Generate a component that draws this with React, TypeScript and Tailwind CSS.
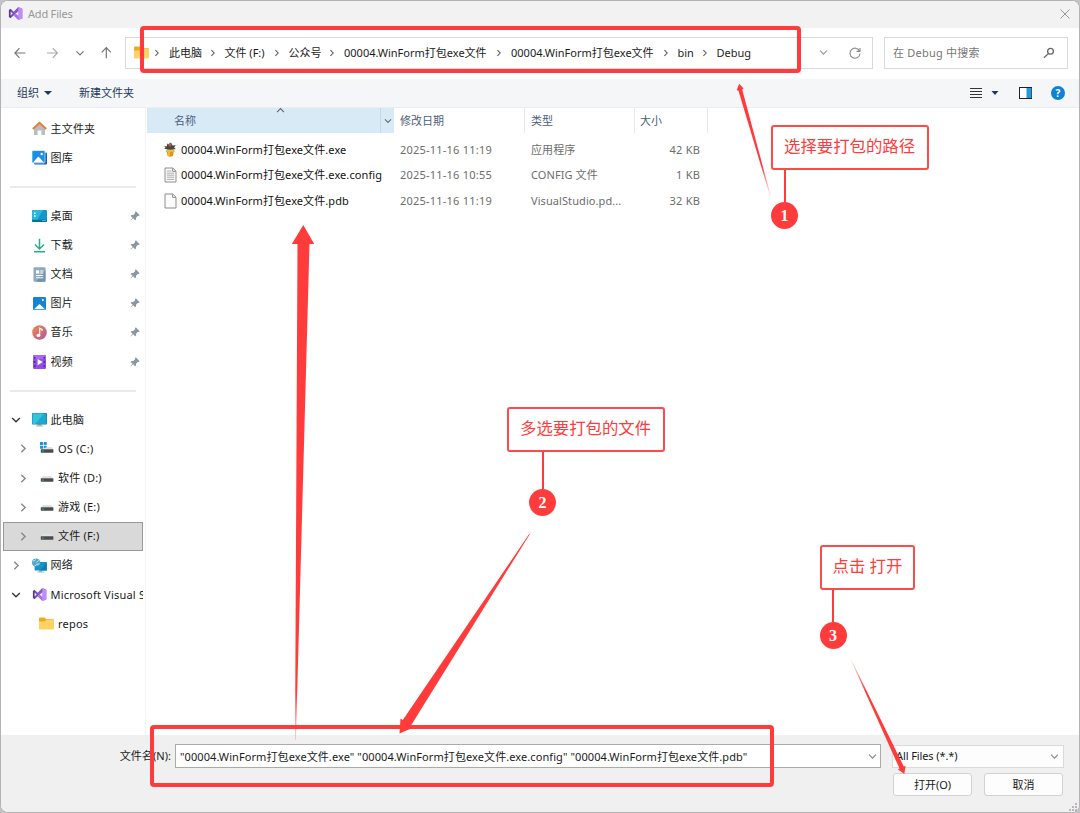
import type { ReactNode } from "react";

const crumbs = [
  { text: "此电脑", width: "w-[33.5px]" },
  { text: "文件 (F:)", width: "w-[42px]" },
  { text: "公众号", width: "w-[33.5px]" },
  { text: "00004.WinForm打包exe文件", width: "w-[145px]" },
  { text: "00004.WinForm打包exe文件", width: "w-[144.5px]" },
  { text: "bin", width: "w-[17px]" },
  { text: "Debug", width: "w-[40px]" },
];

type NavRow = {
  label?: string;
  icon?: ReactNode;
  pinned?: boolean;
  open?: boolean;
  closed?: boolean;
  nested?: boolean;
  selected?: boolean;
};

function Chevron({ dir, className }: { dir: "right" | "down" | "up"; className?: string }) {
  const d = { right: "M3 1.5 6.5 5 3 8.5", down: "M1.2 3 5 6.8 8.8 3", up: "M1.2 6.8 5 3 8.8 6.8" }[dir];
  return (
    <svg viewBox="0 0 10 10" className={className} fill="none" stroke="currentColor" strokeWidth="1.3">
      <path d={d} />
    </svg>
  );
}

function VsLogo() {
  return (
    <svg viewBox="0 0 16 16" className="w-[15px] h-[15px]">
      <path d="M1 4.2 3 3.2 10.8 10.6V5.6L3 12.8 1 11.8Z" fill="#7a4fb5" />
      <path d="M1 4.2 3 3.2V12.8L1 11.8Z" fill="#5c3591" />
      <path d="M2.8 5.8 5 8 2.8 10.2Z" fill="#f4effa" />
      <path d="M11 1 15.3 2.8V13.2L11 15 6 10 11 6Z" fill="#a571e6" />
      <path d="M11 1 15.3 2.8V13.2L11 15Z" fill="#c08bf7" />
      <path d="M11 5.6V10.4L8 8Z" fill="#f4effa" />
      <path d="M11 1 5.8 6.4 8 8.2 11 5.6Z" fill="#8458c9" />
    </svg>
  );
}

function FolderIcon() {
  return (
    <svg viewBox="0 0 15 13" className="w-[15px] h-[13px]">
      <path d="M0 1.5Q0 .5 1 .5H5.5L7.3 2.2H14Q15 2.2 15 3.2V6H0Z" fill="#eeaa22" />
      <path d="M0 4.4H5.5L7.2 3H14.2Q15 3 15 3.8V11.5Q15 12.5 14 12.5H1Q0 12.5 0 11.5Z" fill="#ffd264" />
    </svg>
  );
}

function HomeIcon() {
  return (
    <svg viewBox="0 0 15 15" className="w-[15px] h-[15px]">
      <path d="M2 7 7.5 2 13 7V14H9.4V9.4H5.6V14H2Z" fill="#b9bcc0" />
      <path d="M.8 8 7.5 1.8 14.2 8" fill="none" stroke="#e88136" strokeWidth="2" strokeLinejoin="round" />
    </svg>
  );
}

function GalleryIcon() {
  return (
    <svg viewBox="0 0 15 15" className="w-[15px] h-[15px]">
      <rect x="2" y="2.5" width="13" height="12" rx="1" fill="#1263b5" />
      <rect x="0" y="0.5" width="13" height="12.5" rx="1" fill="#1c8fe0" stroke="#fff" strokeWidth=".6" />
      <path d="M1 12.4 6.3 6.6 12 12.4Z" fill="#fff" />
      <circle cx="9.7" cy="4" r="1.2" fill="#fff" />
    </svg>
  );
}

function DesktopIcon() {
  return (
    <svg viewBox="0 0 15 12" className="w-[15px] h-[12px]">
      <rect width="15" height="12" rx="1.2" fill="#1595cf" />
      <path d="M0 1.2Q0 0 1.2 0H11L4 12H1.2Q0 12 0 10.8Z" fill="#2ab7d8" />
      <path d="M2 2.5H3.6V4H2ZM2 5.3H3.6V6.8H2Z" fill="#fff" />
      <path d="M0 9.8H15V11Q15 12 14 12H1Q0 12 0 11Z" fill="#0d6f9f" />
      <path d="M10.5 10.5H11.5M12.5 10.5H13.5" stroke="#d6f3ff" strokeWidth=".8" />
    </svg>
  );
}

function DownloadIcon() {
  return (
    <svg viewBox="0 0 15 15" className="w-[15px] h-[15px]" fill="none" stroke="#20b28c" strokeWidth="1.5">
      <path d="M7.5 .8V10.5M3 6.5 7.5 11 12 6.5M2 13.8H13" />
    </svg>
  );
}

function DocumentIcon() {
  return (
    <svg viewBox="0 0 13 15" className="w-[13px] h-[15px]">
      <rect x=".5" y=".3" width="12" height="14.4" rx="1" fill="#8fa9c2" />
      <path d="M12.5 3V13.7Q12.5 14.7 11.5 14.7H3Z" fill="#7391b0" />
      <path d="M3 3.3H6.2V6.6H3Z" fill="#fff" />
      <path d="M7.2 4H10.3M7.2 6H10.3M3 8.6H10.3M3 10.8H10.3" stroke="#fff" strokeWidth="1" fill="none" />
    </svg>
  );
}

function PictureIcon() {
  return (
    <svg viewBox="0 0 13 13" className="w-[13px] h-[13px]">
      <rect width="13" height="13" rx="1" fill="#1783d3" />
      <path d="M1 12.3 6.5 7 12 12.3Z" fill="#fff" />
      <circle cx="9.9" cy="3" r="1" fill="#fff" />
    </svg>
  );
}

function MusicIcon() {
  return (
    <svg viewBox="0 0 15 15" className="w-[15px] h-[15px]">
      <defs>
        <linearGradient id="music" x1="0" y1="0" x2="1" y2="1">
          <stop offset="0" stopColor="#f08a4b" />
          <stop offset="1" stopColor="#b5549c" />
        </linearGradient>
      </defs>
      <circle cx="7.5" cy="7.5" r="7.3" fill="url(#music)" />
      <ellipse cx="6.4" cy="10.4" rx="1.9" ry="1.6" fill="#fff" />
      <path d="M7.7 10.4V3.2L10 4.4V6" fill="none" stroke="#fff" strokeWidth="1.1" />
    </svg>
  );
}

function VideoIcon() {
  return (
    <svg viewBox="0 0 13 14" className="w-[13px] h-[14px]">
      <rect width="13" height="14" rx="1.2" fill="#9450e4" />
      <path d="M0 1.2Q0 0 1.2 0H11.8Q13 0 13 1.2V4H0Z" fill="#a86bf0" />
      <path d="M1.7 2V13M11.3 2V13" stroke="#4d2390" strokeWidth="1.5" strokeDasharray="1.7 2.4" />
      <path d="M4.6 4V10.2L9.8 7.1Z" fill="#fff" />
    </svg>
  );
}

function PcIcon() {
  return (
    <svg viewBox="0 0 15 14" className="w-[15px] h-[14px]">
      <path d="M5.5 11H9.5V12.6H11V13.5H4V12.6H5.5Z" fill="#a7b6bf" />
      <rect width="15" height="11.5" rx=".8" fill="#157fae" />
      <rect x=".6" y=".6" width="13.8" height="10.3" fill="#20a9cf" />
      <path d="M.6 .6H12L3 10.9H.6Z" fill="#35c3dc" />
    </svg>
  );
}

function DriveIcon({ os }: { os?: boolean }) {
  return (
    <svg viewBox="0 0 14 12" className="w-[14px] h-[12px] mb-[2px]">
      {os && <path d="M0 0H3V3H0ZM3.7 0H6.7V3H3.7ZM0 3.7H3V6.7H0ZM3.7 3.7H6.7V6.7H3.7Z" fill="#1f92d8" />}
      <path d={os ? "M7.2 5H12L13.3 7.6H1Z" : "M3 5H11L12.8 7.6H1.2Z"} fill="#dfe1e3" />
      <rect x=".8" y="7.3" width="12.6" height="3.4" rx=".4" fill="#4a4c4e" />
      <rect x="2.3" y="8.6" width="1.4" height="1" fill="#3ed65b" />
    </svg>
  );
}

function NetworkIcon() {
  return (
    <svg viewBox="0 0 15 15" className="w-[15px] h-[15px]">
      <path d="M7 12H10V13.6H12V14.5H5.3V13.6H7Z" fill="#a7b6bf" />
      <rect x="2.6" y="4" width="12.2" height="8.6" rx=".6" fill="#1496c6" />
      <path d="M8 12.6 14.8 4V12.6Z" fill="#0f7fb2" />
      <circle cx="4" cy="4.6" r="4" fill="#55a5c9" />
      <path d="M1 2.8Q3 3.6 3.6 1.2M2.6 8Q4.5 6 7.6 5.8M4.4 4.5 6.8 2.4" stroke="#c7edf6" strokeWidth=".9" fill="none" />
    </svg>
  );
}

function PinIcon() {
  return (
    <svg viewBox="0 0 10 10" className="w-[10px] h-[10px]">
      <path d="M5.8 .3 9.7 4.2 8.5 5 7.7 4.9 6 6.7 6 8.6 5 9.3 3.2 7.3 .8 9.6 .4 9.2 2.7 6.8 .7 5 1.5 4 3.3 4 5.1 2.3 5 1.3Z" fill="#8b97a0" />
    </svg>
  );
}

const navRows: NavRow[] = [
  { label: "主文件夹", icon: <HomeIcon /> },
  { label: "图库", icon: <GalleryIcon /> },
  {},
  { label: "桌面", icon: <DesktopIcon />, pinned: true },
  { label: "下载", icon: <DownloadIcon />, pinned: true },
  { label: "文档", icon: <DocumentIcon />, pinned: true },
  { label: "图片", icon: <PictureIcon />, pinned: true },
  { label: "音乐", icon: <MusicIcon />, pinned: true },
  { label: "视频", icon: <VideoIcon />, pinned: true },
  {},
  { label: "此电脑", icon: <PcIcon />, open: true },
  { label: "OS (C:)", icon: <DriveIcon os />, closed: true, nested: true },
  { label: "软件 (D:)", icon: <DriveIcon />, closed: true, nested: true },
  { label: "游戏 (E:)", icon: <DriveIcon />, closed: true, nested: true },
  { label: "文件 (F:)", icon: <DriveIcon />, closed: true, nested: true, selected: true },
  { label: "网络", icon: <NetworkIcon />, closed: true },
  { label: "Microsoft Visual S", icon: <VsLogo />, open: true },
  { label: "repos", icon: <FolderIcon />, nested: true },
];

function PlantIcon() {
  return (
    <svg viewBox="0 0 14 15" className="w-[14px] h-[15px]">
      <path d="M1 4 3.6 4.4 4.4 1.6 6 2.4 7 .4 8.6 1.6 9.6 3.6 12.8 3.2 11 5.5 12.8 7 9 7.8H5L1.2 6.6 2.6 5.4Z" fill="#474a38" />
      <path d="M5.4 2.4 7.2 .8 8.8 2.6 7.8 4.6 5.8 4.2Z" fill="#a8605c" />
      <path d="M2 5 5 5.4 4.6 7ZM9.4 5.2 11.8 4.6 10 6.8Z" fill="#2f5a2b" />
      <path d="M3 8.2H11.4V9.8H10.7L10 14Q7 15.3 4.6 14L3.8 9.8H3Z" fill="#e0931a" />
      <path d="M3 8.2H11.4V9.8H3ZM5 10H6.8V14.2L5.4 14Z" fill="#f5bf3d" />
    </svg>
  );
}

function PageIcon({ lines }: { lines?: boolean }) {
  return (
    <svg viewBox="0 0 13 16" className="w-[13px] h-[16px]" fill="#fbfbfb" stroke="#8d8d8d" strokeWidth="1">
      <path d="M1 1H8.8L12 4.2V15H1Z" />
      <path d="M8.6 1.2V4.4H11.8" fill="none" />
      {lines && <path d="M2.8 4H7.5M2.8 6.2H10.3M2.8 8.2H10.3M2.8 10.2H10.3M2.8 12.4H10.3" stroke="#a3a3a3" strokeWidth=".9" />}
    </svg>
  );
}

const files = [
  { icon: <PlantIcon />, name: "00004.WinForm打包exe文件.exe", date: "2025-11-16 11:19", type: "应用程序", size: "42 KB" },
  { icon: <PageIcon lines />, name: "00004.WinForm打包exe文件.exe.config", date: "2025-11-16 10:55", type: "CONFIG 文件", size: "1 KB" },
  { icon: <PageIcon />, name: "00004.WinForm打包exe文件.pdb", date: "2025-11-16 11:19", type: "VisualStudio.pd...", size: "32 KB" },
];

function TitleBar() {
  return (
    <div className="h-[27px] shrink-0 bg-[#f2f2f2] flex items-center pl-[7px] pr-[9px] pb-[2px]">
      <VsLogo />
      <span className="ml-[5px] text-[#999] tracking-[-0.2px]">Add Files</span>
      <svg viewBox="0 0 10 10" className="ml-auto w-[10px] h-[10px]" stroke="#8c8c8c" strokeWidth=".9">
        <path d="M.5 .5 9.5 9.5M9.5 .5 .5 9.5" />
      </svg>
    </div>
  );
}

function AddressRow() {
  return (
    <div className="h-[51px] shrink-0 flex items-center pl-[13px] pr-[11px] pb-[1px]">
      <svg viewBox="0 0 100 14" className="w-[100px] h-[14px]" fill="none" stroke="#777" strokeWidth="1.2">
        <path d="M11.4 7H1M5.5 2.2 .9 7 5.5 11.8" />
        <path d="M33 7H43.4M38.8 2.2 43.4 7 38.8 11.8" stroke="#aaa" />
        <path d="M62.5 5.3 66 8.8 69.5 5.3" stroke="#777" />
        <path d="M92.3 12.3V2M87.7 6.4 92.3 1.7 96.9 6.4" />
      </svg>
      <div className="ml-[11px] w-[748px] h-[32px] border border-[#d9d9d9] flex items-center pl-[8px] pr-[11px] pb-[1px]">
        <FolderIcon />
        <div className="flex items-center ml-[-2px] text-[#1c1c1c] whitespace-nowrap">
          {crumbs.map((crumb, i) => (
            <div key={i} className="flex items-center">
              <div className="w-[22px] pl-[6px]">
                <Chevron dir="right" className="w-[8px] h-[8px] text-[#555]" />
              </div>
              <span className={crumb.width}>{crumb.text}</span>
            </div>
          ))}
        </div>
        <Chevron dir="down" className="ml-auto w-[9px] h-[9px] text-[#999]" />
        <svg viewBox="0 0 12 12" className="ml-[21px] w-[12px] h-[12px]" fill="none" stroke="#8c8c8c" strokeWidth="1.1">
          <path d="M10.6 4.2A5 5 0 1 0 11 6.5M11 1V4.4H7.5" />
        </svg>
      </div>
      <div className="ml-auto w-[184px] h-[32px] border border-[#d9d9d9] flex items-center pl-[8px] pr-[12px]">
        <span className="text-[#777] tracking-[0.22px]">在 Debug 中搜索</span>
        <svg viewBox="0 0 12 12" className="ml-auto w-[12px] h-[12px]" fill="none" stroke="#666" strokeWidth="1.3">
          <circle cx="7.5" cy="4.3" r="2.9" />
          <path d="M5.3 6.6 1 10.8" />
        </svg>
      </div>
    </div>
  );
}

function Toolbar() {
  return (
    <div className="h-[29px] shrink-0 bg-[#f4f6f8] border-b border-[#ebedf0] flex items-center pl-[16px] pr-[14px] text-[#1e395b]">
      <span>组织</span>
      <svg viewBox="0 0 8 4" className="ml-[5px] w-[8px] h-[4px]">
        <path d="M0 0H8L4 4Z" fill="#1e395b" />
      </svg>
      <span className="ml-[27px]">新建文件夹</span>
      <svg viewBox="0 0 12 10" className="ml-auto w-[12px] h-[10px]" stroke="#333" strokeWidth="1">
        <path d="M0 .5H12M0 3.5H12M0 6.5H12M0 9.5H12" />
      </svg>
      <svg viewBox="0 0 8 4" className="ml-[9px] w-[8px] h-[4px]">
        <path d="M.5 0H7.5L4 4Z" fill="#1e395b" />
      </svg>
      <svg viewBox="0 0 13 12" className="ml-[20px] w-[13px] h-[12px]">
        <rect x=".5" y=".5" width="12" height="11" fill="#fff" stroke="#222" />
        <rect x="7.5" y="1" width="5" height="10" fill="#2598dc" />
      </svg>
      <span className="ml-[19px] w-[14px] h-[14px] rounded-full bg-[#0d83d6] text-white font-bold text-[10px] leading-[14px] text-center">?</span>
    </div>
  );
}

function NavPane() {
  return (
    <div className="w-[145px] shrink-0 border-r border-[#f4f4f4] pt-[6px] pr-[2px] pl-[2px] text-[#1a1a1a]">
      {navRows.map((row, i) =>
        row.label ? (
          <div
            key={i}
            className={
              row.selected
                ? "h-[29.13px] flex items-center bg-[#d9d9d9] outline outline-1 outline-offset-[-1px] outline-[#999]"
                : "h-[29.13px] flex items-center overflow-hidden"
            }
          >
            <div className={row.nested ? "w-[36px] shrink-0 pl-[15px]" : "w-[28.5px] shrink-0 pl-[8px]"}>
              {row.open && <Chevron dir="down" className="w-[10px] h-[10px] text-[#333]" />}
              {row.closed && <Chevron dir="right" className="w-[11px] h-[11px] text-[#888]" />}
            </div>
            <div className="w-[15px] shrink-0 flex justify-center">{row.icon}</div>
            <span className="ml-[4px] whitespace-nowrap tracking-[0.2px]">{row.label}</span>
            {row.pinned && (
              <div className="ml-auto pr-[3px]">
                <PinIcon />
              </div>
            )}
          </div>
        ) : (
          <div key={i} className="h-[29.13px] flex items-center pl-[7px] pr-[7px]">
            <div className="w-full h-[2px] bg-[#ebebeb]" />
          </div>
        ),
      )}
    </div>
  );
}

function FileList() {
  return (
    <div className="flex-1 pl-[1px]">
      <div className="flex h-[25px] text-[#4c607a]">
        <div className="w-[247px] bg-[#d9eaf7] flex items-center pl-[27px] relative">
          名称
          <Chevron dir="up" className="absolute left-[129px] top-[-2px] w-[9px] h-[9px] text-[#666]" />
          <div className="ml-auto w-[14px] h-full border-l border-[#c3d8e8] flex items-center justify-center">
            <Chevron dir="down" className="w-[8px] h-[8px] text-[#5c6b7a]" />
          </div>
        </div>
        <div className="w-[131px] border-r border-[#e8e8e8] flex items-center pl-[6px]">修改日期</div>
        <div className="w-[110px] border-r border-[#e8e8e8] flex items-center pl-[6px]">类型</div>
        <div className="w-[73px] border-r border-[#e8e8e8] flex items-center pl-[5px]">大小</div>
      </div>
      <div className="pt-[4px]">
        {files.map((file) => (
          <div key={file.name} className="h-[25.5px] flex items-center text-[#6d6d6d]">
            <div className="w-[253px] flex items-center pl-[16px] text-[#111]">
              <div className="w-[14px] flex justify-center">{file.icon}</div>
              <span className="ml-[4px] tracking-[0.085px]">{file.name}</span>
            </div>
            <span className="w-[131px] tracking-[0.22px]">{file.date}</span>
            <span className="w-[109px] tracking-[0.08px]">{file.type}</span>
            <span className="w-[60px] text-right tracking-[0.2px]">{file.size}</span>
          </div>
        ))}
      </div>
    </div>
  );
}

function Footer() {
  return (
    <div className="h-[77px] shrink-0 bg-[#f0f0f0] pt-[9px] text-[#1a1a1a]">
      <div className="flex items-center h-[24px]">
        <span className="w-[170px] text-right tracking-[0.05px]">文件名(N):</span>
        <div className="ml-[4px] w-[706px] h-[24px] bg-white border border-[#aaa] flex items-center pl-[4px] pr-[3px] pt-[1px]">
          <span className="whitespace-nowrap tracking-[0.085px]">
            "00004.WinForm打包exe文件.exe" "00004.WinForm打包exe文件.exe.config" "00004.WinForm打包exe文件.pdb"
          </span>
          <Chevron dir="down" className="ml-auto w-[9px] h-[9px] text-[#888]" />
        </div>
        <div className="ml-[11px] w-[172px] h-[23px] bg-[#fdfdfd] border border-[#dadada] flex items-center pl-[3px] pr-[4px]">
          <span className="tracking-[-0.1px]">All Files (*.*)</span>
          <Chevron dir="down" className="ml-auto w-[9px] h-[9px] text-[#888]" />
        </div>
      </div>
      <div className="flex gap-[12px] mt-[5px] pl-[892px]">
        <button className="w-[79px] h-[23px] bg-[#fdfdfd] border border-[#d2d2d2] rounded-[3px]">打开(O)</button>
        <button className="w-[79px] h-[23px] bg-[#fdfdfd] border border-[#d2d2d2] rounded-[3px]">取消</button>
      </div>
    </div>
  );
}

const callouts = [
  { num: 1, text: "选择要打包的路径", place: "left-[771px] top-[125px]", width: "w-[158px]", stem: "h-[32px] ml-[13px]", badge: "ml-0" },
  { num: 2, text: "多选要打包的文件", place: "left-[507px] top-[407px]", width: "w-[158px]", stem: "h-[37px] ml-[35px]", badge: "ml-[22px]" },
  { num: 3, text: "点击 打开", place: "left-[819.5px] top-[545px]", width: "w-[95px]", stem: "h-[32px] ml-[12.5px]", badge: "ml-0" },
];

function Annotations() {
  return (
    <>
      <div className="absolute left-[140px] top-[26px] w-[660.5px] h-[47px] border-[4px] border-[#ff3b3b] rounded-[4px]" />
      <div className="absolute left-[150px] top-[725px] w-[624px] h-[62px] border-[4px] border-[#ff3b3b] rounded-[4px]" />
      <svg viewBox="0 0 1080 813" className="absolute inset-0 w-[1080px] h-[813px] pointer-events-none">
        <defs>
          <linearGradient id="a1" gradientUnits="userSpaceOnUse" x1="771" y1="196" x2="762" y2="165">
            <stop offset="0" stopColor="#ff3b3b" stopOpacity="0.1" />
            <stop offset="1" stopColor="#ff3b3b" />
          </linearGradient>
          <linearGradient id="a2" gradientUnits="userSpaceOnUse" x1="295" y1="740" x2="295" y2="690">
            <stop offset="0" stopColor="#ff3b3b" stopOpacity="0.2" />
            <stop offset="1" stopColor="#ff3b3b" />
          </linearGradient>
          <linearGradient id="a4" gradientUnits="userSpaceOnUse" x1="851" y1="660" x2="866" y2="692">
            <stop offset="0" stopColor="#ff3b3b" stopOpacity="0.1" />
            <stop offset="1" stopColor="#ff3b3b" />
          </linearGradient>
        </defs>
        <path d="M739.2 83.8 743.6 88.6 742.2 89.4 770.8 196 770 196 738.4 90.6 736.6 90.2Z" fill="url(#a1)" />
        <path d="M303.3 225 314.2 244 309.5 244 295.9 740 295 740 297.5 244 291.8 244Z" fill="url(#a2)" />
        <path d="M399.5 733.5 400.5 718.5 402.8 720 529.3 533.8 529.8 534.2 411 725.5 413.5 727.5Z" fill="#ff3b3b" />
        <path d="M904.3 774 897.8 769.3 899.5 768.5 850.8 660 851.5 660 903.8 766.5 905.6 765.8Z" fill="url(#a4)" />
      </svg>
      {callouts.map((c) => (
        <div key={c.num} className={`absolute ${c.place}`}>
          <div
            className={`${c.width} h-[45px] bg-white border-2 border-[#ff4a4a] rounded-[3px] pl-[11px] pb-[4px] flex items-center text-[16.4px] whitespace-nowrap text-[#ff3b3b]`}
          >
            {c.text}
          </div>
          <div className={`w-[2px] bg-[#ff3b3b] ${c.stem}`} />
          <div
            className={`w-[27px] h-[27px] rounded-full bg-[#ff3b3b] text-white font-bold text-[16px] leading-[27px] text-center font-['Liberation_Serif',serif] ${c.badge}`}
          >
            {c.num}
          </div>
        </div>
      ))}
    </>
  );
}

export default function App() {
  return (
    <div className="relative w-[1080px] h-[813px] overflow-hidden bg-[#c4c2c4] font-['Noto_Sans','Noto_Sans_CJK_SC',sans-serif] text-[11px] leading-[16px]">
      <div className="w-[1080px] h-[813px] border border-[#b3b3b3] rounded-[8px] overflow-hidden bg-white flex flex-col">
        <TitleBar />
        <AddressRow />
        <Toolbar />
        <div className="flex flex-1 min-h-0">
          <NavPane />
          <FileList />
        </div>
        <Footer />
      </div>
      {/* resize grip */}
      <svg viewBox="0 0 9 9" className="absolute left-[1069px] top-[803px] w-[9px] h-[9px]" fill="#b8b8b8">
        <path d="M6 0H8V2H6ZM3 3H5V5H3ZM6 3H8V5H6ZM0 6H2V8H0ZM3 6H5V8H3ZM6 6H8V8H6Z" />
      </svg>
      <Annotations />
    </div>
  );
}
